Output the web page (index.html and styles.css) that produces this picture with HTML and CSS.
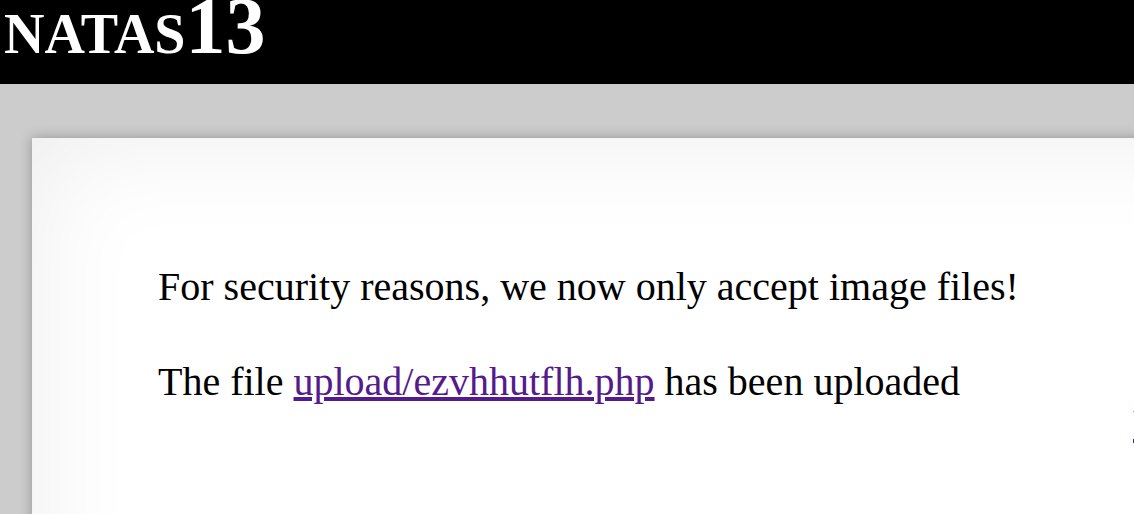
FILE: index.html
```html
<!DOCTYPE html>
<html>
<head>
<meta charset="utf-8">
<link rel="stylesheet" href="styles.css">
</head>
<body>
<header class="top">
  <h1 class="title">natas<span class="num">13</span></h1>
</header>
<main class="content">
  <p class="line">For security reasons, we now only accept image files!</p>
  <p class="line">The file <a class="link" href="#">upload/ezvhhutflh.php</a> has been uploaded</p>
  <div class="viewsource"><a class="srclink" href="#">View sourcecode</a></div>
</main>
</body>
</html>
```
FILE: styles.css
```css
html, body {
  margin: 0;
  padding: 0;
  overflow: hidden;
}
body {
  background: #cccccc;
  width: 1134px;
  height: 514px;
  font-family: "Liberation Serif", "Times New Roman", serif;
}
.top {
  background: #000;
  height: 84px;
  overflow: hidden;
}
.title {
  margin: -14px 0 0 4px;
  font-size: 80px;
  line-height: 1;
  font-weight: bold;
  font-variant: small-caps;
  color: #fff;
  white-space: nowrap;
}
.num {
  font-variant: normal;
}
.content {
  position: relative;
  margin: 54px 0 0 32px;
  width: 2100px;
  height: 600px;
  background: #fff;
  box-shadow: 0 0 12px rgba(0,0,0,0.28), inset 0 0 110px rgba(0,0,0,0.075);
  padding: 125px 0 0 126px;
  box-sizing: border-box;
  font-size: 40px;
}
.line {
  margin: 0;
  line-height: 47.5px;
}
.line + .line {
  margin-top: 47.5px;
}
.link {
  color: #551a8b;
}
.viewsource {
  position: absolute;
  left: 1101px;
  top: 262px;
  white-space: nowrap;
}
.srclink {
  color: #551a8b;
}
```
